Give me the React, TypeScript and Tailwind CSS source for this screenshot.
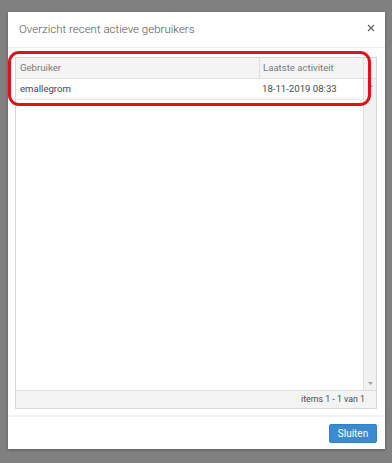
import React from "react";

export default function App() {
  return (
    <div
      className="w-[392px] h-[463px] bg-[#808080] pt-[12px] pl-[8px] relative overflow-hidden"
      style={{ fontFamily: "Roboto, 'Liberation Sans', sans-serif" }}
    >
      <div className="w-[377px] h-[437px] bg-white flex flex-col shadow-[0_1px_3px_rgba(0,0,0,0.3)]">
        <div className="h-[36px] flex items-center justify-between border-b border-[#ececec] pl-[11px] pr-[10px] shrink-0">
          <span className="text-[11.5px] text-[#555] font-light">Overzicht recent actieve gebruikers</span>
          <svg width="8" height="8" viewBox="0 0 8 8" className="mb-[4px]">
            <path d="M1 1L7 7M7 1L1 7" stroke="#666" strokeWidth="1.3" />
          </svg>
        </div>
        <div className="flex-1 pt-[9px] px-[7px] pr-[8px] pb-[6px] flex flex-col">
          <div className="flex-1 border border-[#d6d6d6] flex flex-col">
            <div className="flex-1 flex">
              <div className="flex-1 flex flex-col">
                <div className="h-[21px] flex bg-[#f4f4f4] border-b border-[#e0e0e0] text-[9.6px] text-[#7a7a7a]">
                  <div className="w-[244px] border-r border-[#e0e0e0] pl-[4px] flex items-center">Gebruiker</div>
                  <div className="flex-1 pl-[3px] flex items-center">Laatste activiteit</div>
                </div>
                <div className="h-[21px] flex border-b border-[#e8e8e8] text-[9.6px] text-[#484848]">
                  <div className="w-[244px] pl-[4px] flex items-center">emallegrom</div>
                  <div className="flex-1 pl-[2px] flex items-center">18-11-2019 08:33</div>
                </div>
              </div>
              <div className="w-[13px] flex flex-col bg-[#f1f1f1] border-l border-[#e0e0e0]">
                <div className="h-[21px] bg-[#f4f4f4] border-b border-[#e0e0e0]" />
                <div className="flex-1 flex flex-col items-center justify-between py-[5px]">
                  <svg width="5" height="3" viewBox="0 0 5 3"><path d="M0 3L2.5 0L5 3Z" fill="#a3a3a3" /></svg>
                  <svg width="5" height="3" viewBox="0 0 5 3"><path d="M0 0L2.5 3L5 0Z" fill="#a3a3a3" /></svg>
                </div>
              </div>
            </div>
            <div className="h-[18px] bg-[#f3f3f3] border-t border-[#dcdcdc] flex items-center justify-end pr-[11px] text-[8.8px] text-[#4a4a4a]">
              items 1 - 1 van 1
            </div>
          </div>
        </div>
        <div className="h-[34px] border-t-[2px] border-[#f2f2f2] flex items-center justify-end pr-[8px] shrink-0">
          <button className="w-[48px] h-[19px] bg-[#3b8bd0] text-white text-[10px] rounded-[2px] flex items-center justify-center border border-[#3580c2]">
            Sluiten
          </button>
        </div>
      </div>
      <div className="absolute left-[8px] top-[51px] w-[363px] h-[55px] border-[3px] border-[#e3101c] rounded-[11px]" />
    </div>
  );
}
